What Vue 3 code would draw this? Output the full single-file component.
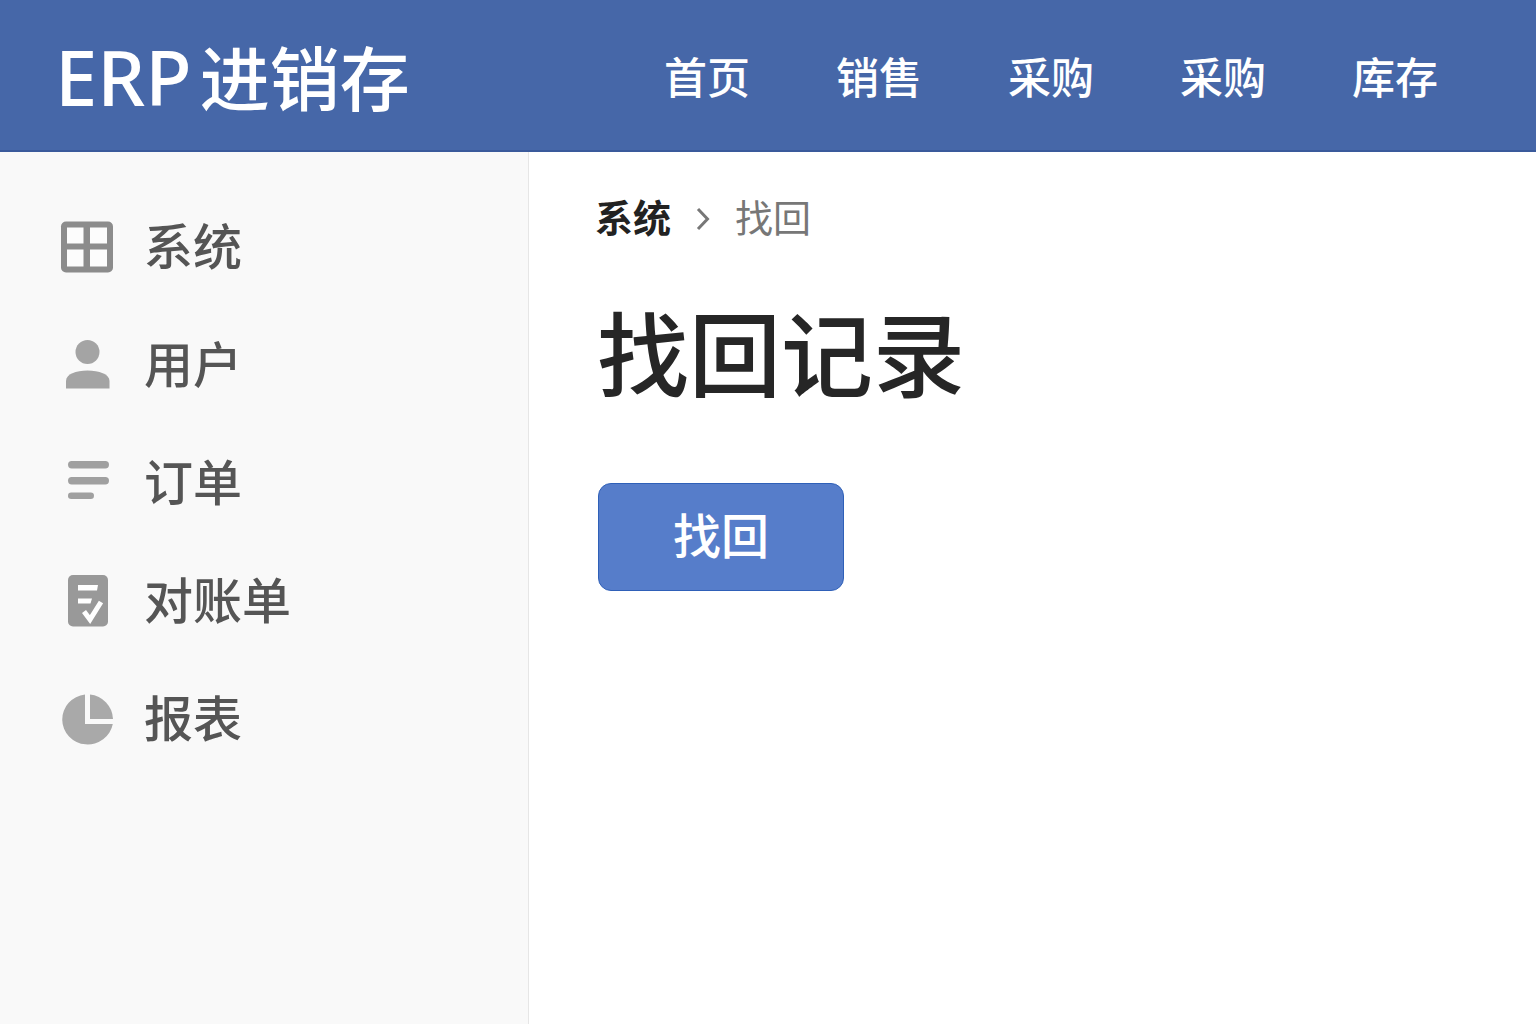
<script setup>
const navItems = [
  { id: 1, label: '首页' },
  { id: 2, label: '销售' },
  { id: 3, label: '采购' },
  { id: 4, label: '采购' },
  { id: 5, label: '库存' }
]

const menuItems = [
  { icon: 'grid', label: '系统' },
  { icon: 'user', label: '用户' },
  { icon: 'list', label: '订单' },
  { icon: 'bill', label: '对账单' },
  { icon: 'pie', label: '报表' }
]
</script>

<template>
  <div class="layout">
    <header class="header">
      <div class="logo"><span class="logo-en">ERP</span><span>进销存</span></div>
      <nav class="nav">
        <a v-for="item in navItems" :key="item.id" href="#">{{ item.label }}</a>
      </nav>
    </header>

    <div class="body">
      <aside class="sidebar">
        <a v-for="item in menuItems" :key="item.icon" class="menu-item" href="#">
          <svg class="menu-icon" viewBox="0 0 56 56" aria-hidden="true">
            <g v-if="item.icon === 'grid'">
              <rect x="2" y="2.5" width="52" height="51" rx="5" fill="#8c8c8c" />
              <path d="M8 8.500h16.500v16H8zM31 8.500h17v16H31zM8 30.500h16.500v17H8zM31 30.500h17v17H31z" fill="#fcfcfc" />
            </g>
            <g v-else-if="item.icon === 'user'" fill="#a4a4a4">
              <circle cx="28.5" cy="15" r="12" />
              <path d="M7 51.500V44C7 37 17 33.500 28.500 33.500S50.500 37 50.500 44v7.500z" />
            </g>
            <g v-else-if="item.icon === 'list'" fill="#a0a0a0">
              <rect x="9" y="6" width="41" height="7.5" rx="3.7" />
              <rect x="9" y="22" width="41" height="7.5" rx="3.7" />
              <rect x="9" y="37.500" width="26" height="6.5" rx="3.2" />
            </g>
            <g v-else-if="item.icon === 'bill'">
              <rect x="9" y="2" width="40" height="51.5" rx="5" fill="#999" />
              <path d="M19 12H39L38 17.500H19zM19 25.500h14l-1.500 5H19z" fill="#fff" />
              <path d="M25 38.500L31 46.500L42 29" fill="none" stroke="#fff" stroke-width="5" />
            </g>
            <g v-else fill="#a9a9a9">
              <path d="M26 3.600A25.500 25 0 1 0 53.800 33H26z" />
              <path d="M31 3.600A25.500 25.500 0 0 1 54 28H31z" />
            </g>
          </svg>
          <span>{{ item.label }}</span>
        </a>
      </aside>

      <main class="main">
        <nav class="breadcrumb">
          <a href="#">系统</a>
          <svg class="chevron" viewBox="0 0 14 24" aria-hidden="true">
            <path d="M2 2L11.500 12L2 22" fill="none" stroke="#777" stroke-width="3" />
          </svg>
          <span>找回</span>
        </nav>
        <h1 class="title">找回记录</h1>
        <button class="btn" type="button">找回</button>
      </main>
    </div>
  </div>
</template>

<style>
body {
  margin: 0;
  background: #fff;
}
</style>

<style scoped>
.layout {
  display: flex;
  flex-direction: column;
  min-height: 100vh;
  font-family: "Noto Sans CJK SC", "Noto Sans", sans-serif;
}

a {
  color: inherit;
  text-decoration: none;
}

.header {
  display: flex;
  align-items: center;
  justify-content: space-between;
  box-sizing: border-box;
  height: 152px;
  padding: 0 98px 0 55px;
  background: #4667a8;
  border-bottom: 2px solid #3a5a9b;
  color: #fff;
}

.logo {
  display: flex;
  align-items: baseline;
  gap: 8px;
  padding-top: 3px;
  font-size: 70px;
  font-weight: 500;
  line-height: 100px;
}

.logo-en {
  font-family: "Noto Sans", sans-serif;
  font-size: 76px;
}

.nav {
  display: flex;
  gap: 86px;
  font-size: 43px;
  font-weight: 500;
  line-height: 64px;
}

.body {
  display: flex;
  flex: 1;
}

.sidebar {
  display: flex;
  flex-direction: column;
  gap: 48px;
  box-sizing: border-box;
  width: 529px;
  padding: 57px 59px;
  background: #f9f9f9;
  border-right: 1px solid #e6e6e6;
}

.menu-item {
  display: flex;
  align-items: center;
  gap: 29px;
  color: #555;
  font-size: 49px;
  font-weight: 500;
  line-height: 70px;
}

.menu-icon {
  width: 56px;
  height: 56px;
  margin-top: 6px;
}

.main {
  flex: 1;
  padding: 37px 66px;
}

.breadcrumb {
  display: flex;
  align-items: center;
  gap: 25px;
  color: #777;
  font-size: 38px;
  line-height: 54px;
}

.breadcrumb a {
  color: #222;
  font-weight: 700;
}

.chevron {
  width: 14px;
  height: 24px;
  margin-top: 6px;
}

.title {
  margin: 52px 0 78px 2px;
  color: #262626;
  font-size: 92px;
  font-weight: 500;
  line-height: 110px;
}

.btn {
  box-sizing: border-box;
  min-width: 246px;
  height: 108px;
  margin-left: 3px;
  padding: 0 72px 8px;
  background: #567dca;
  border: 1px solid #2f60b8;
  border-radius: 13px;
  color: #fff;
  font-family: inherit;
  font-size: 48px;
  font-weight: 500;
}
</style>
